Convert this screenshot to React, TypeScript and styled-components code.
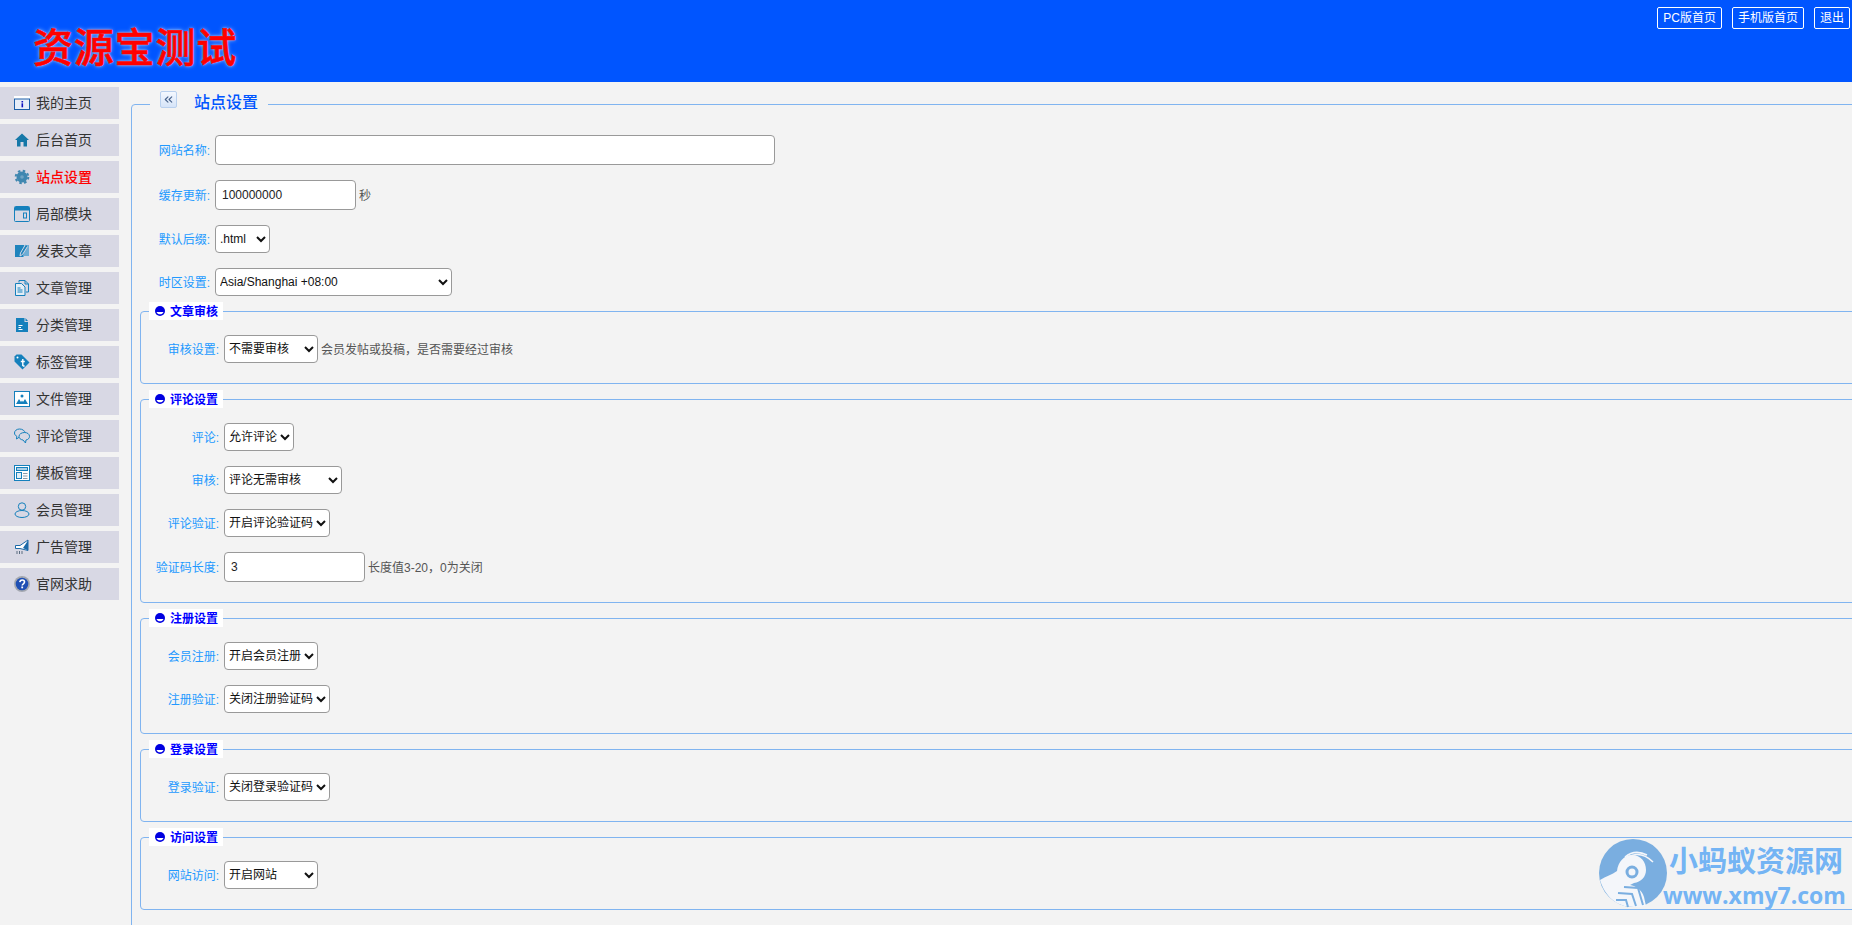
import React from "react";
import styled, { createGlobalStyle } from "styled-components";
import { ChevronsLeft } from "lucide-react";

const GlobalStyle = createGlobalStyle`
  html, body {
    margin: 0;
    padding: 0;
    background: #f3f3f3;
    overflow: hidden;
  }
  body, input, select {
    font-family: "Liberation Sans", "Noto Sans CJK SC", sans-serif;
    font-size: 12px;
  }
`;

const Page = styled.div`
  position: relative;
  width: 100vw;
  height: 100vh;
  overflow: hidden;
`;

const Header = styled.header`
  height: 82px;
  background: #0055ff;
  display: flex;
  justify-content: space-between;
  align-items: flex-start;
`;

const Logo = styled.div`
  margin: 26px 0 0 33px;
  font-size: 40px;
  line-height: 44px;
  font-weight: 500;
  letter-spacing: 0.8px;
  color: #ff0000;
  -webkit-text-stroke: 0.6px #ff0000;
  text-shadow: 0 0 4px #a8c8f4, 0 0 2px #a8c8f4;
`;

const TopLinks = styled.nav`
  display: flex;
  gap: 10px;
  margin: 7px 2px 0 0;
`;

const TopLink = styled.a`
  height: 20px;
  line-height: 20px;
  padding: 0 5px;
  border: 1px solid #ffffff;
  border-radius: 2px;
  color: #ffffff;
  font-size: 12px;
`;

const Body = styled.div`
  display: flex;
`;

const Sidebar = styled.aside`
  flex: none;
  width: 119px;
  padding-top: 5px;
  display: flex;
  flex-direction: column;
  gap: 5px;
`;

const MenuItem = styled.a<{ $active?: boolean }>`
  height: 32px;
  display: flex;
  align-items: center;
  gap: 6px;
  padding-left: 14px;
  background: #d8d8e4;
  font-size: 14px;
  color: ${(p) => (p.$active ? "#ff0000" : "#333333")};
  font-weight: ${(p) => (p.$active ? 500 : 400)};
`;

const MenuLabel = styled.span`
  padding-bottom: 2px;
`;

const MenuIcon = styled.svg`
  flex: none;
  width: 16px;
  height: 16px;
`;

const Main = styled.main`
  flex: none;
  width: 1780px;
  margin-left: 12px;
`;

const OuterSet = styled.fieldset`
  margin: 6px 0 0;
  padding: 0 8px 20px;
  min-width: 0;
  border: 1px solid #80b4f0;
  border-radius: 4px;
`;

const OuterLegend = styled.legend`
  margin-left: 10px;
  padding: 3px 10px 0;
  height: 29px;
  display: flex;
  align-items: flex-start;
`;

const CollapseButton = styled.span`
  width: 15px;
  height: 15px;
  border: 1px solid #b9d0ee;
  border-radius: 2px;
  background: linear-gradient(#f4f8fe, #d6e4f8);
  display: flex;
  align-items: center;
  justify-content: center;
  color: #46618a;
`;

const PageTitle = styled.span`
  margin: 1px 0 0 17px;
  font-size: 16px;
  line-height: 22px;
  font-weight: 500;
  color: #0055ff;
`;

const InnerSet = styled.fieldset`
  margin: 6px 0 0;
  padding: 0 8px 20px;
  min-width: 0;
  border: 1px solid #80b4f0;
  border-radius: 4px;
`;

const InnerLegend = styled.legend`
  height: 18px;
  padding: 0 5px 0 6px;
  background: #ffffff;
  display: flex;
  align-items: center;
  gap: 5px;
  font-size: 12px;
  font-weight: 700;
  color: #0000ff;
`;

const LegendText = styled.span`
  padding-bottom: 2px;
`;

const Row = styled.div`
  margin-top: 15px;
  display: flex;
  align-items: center;
`;

const Label = styled.label`
  flex: none;
  width: 70px;
  margin-right: 5px;
  padding-bottom: 2px;
  text-align: right;
  font-size: 12px;
  white-space: nowrap;
  color: #2299ff;
`;

const TextInput = styled.input<{ $w: number }>`
  box-sizing: border-box;
  width: ${(p) => p.$w}px;
  height: 30px;
  padding: 0 6px;
  background: #ffffff;
  border: 1px solid #999999;
  border-radius: 4px;
  color: #222222;
  font-size: 12px;
  outline: none;
`;

const Select = styled.select<{ $w: number }>`
  box-sizing: border-box;
  width: ${(p) => p.$w}px;
  height: 28px;
  background: #ffffff;
  border: 1px solid #999999;
  border-radius: 4px;
  color: #111111;
  font-size: 12px;
`;

const Hint = styled.span`
  margin-left: 3px;
  padding-bottom: 2px;
  color: #555555;
  font-size: 12px;
`;

const Watermark = styled.div`
  position: absolute;
  left: 1598px;
  top: 838px;
  display: flex;
  align-items: flex-start;
`;

const WatermarkText = styled.div`
  margin: 4px 0 0 -5px;
  display: flex;
  flex-direction: column;
  color: #74b4f4;
  font-weight: 700;
`;

const WatermarkName = styled.span`
  font-size: 29px;
  line-height: 40px;
  margin-left: 6px;
  white-space: nowrap;
`;

const WatermarkUrl = styled.span`
  font-family: "Open Sans", sans-serif;
  font-size: 23px;
  line-height: 26px;
  white-space: nowrap;
`;

const blue = "#1580bc";
const itemBg = "#d8d8e4";

const icons: Record<string, React.ReactNode> = {
  window: (
    <>
      <rect x="0" y="1" width="16" height="14" fill="#1d5fa8" />
      <rect x="0" y="1" width="16" height="2.5" fill="#ffffff" />
      <rect x="1" y="4.5" width="14" height="9.5" fill="#e8eef8" />
      <rect x="7.5" y="6" width="1.6" height="1.5" fill="#1010c0" />
      <rect x="7.5" y="8.3" width="1.6" height="4" fill="#1010c0" />
    </>
  ),
  home: <path d="M8 1.500L1 8h2v6.500h3.500V10h3v4.500H13V8h2z" fill="#1678a8" />,
  gear: (
    <>
      <circle cx="8" cy="8" r="5.500" fill="#3f87b0" />
      <circle cx="8" cy="8" r="6.300" fill="none" stroke="#3f87b0" strokeWidth="2" strokeDasharray="2.500 2.450" />
      <circle cx="8" cy="8" r="1.800" fill="#6fa4c4" />
    </>
  ),
  block: (
    <>
      <rect x="0.500" y="0.500" width="15" height="15" rx="1" fill="none" stroke={blue} />
      <rect x="1" y="1" width="14" height="3.500" fill={blue} />
      <rect x="9.500" y="7" width="3" height="5" fill="none" stroke={blue} />
    </>
  ),
  write: (
    <>
      <rect x="1" y="2" width="14" height="12" fill="#1f84bd" />
      <path d="M10 2h5v12H9z" fill="#6fadd4" />
      <path d="M11.500 1.500L6.500 10 6 13l2.500-1.500 5-8" fill="#1f84bd" stroke={itemBg} strokeWidth="1" />
      <path d="M10 13.500h5" stroke={itemBg} />
    </>
  ),
  docs: (
    <>
      <path d="M5 2.500V.5h6l3.500 3.500v8H12" fill="none" stroke={blue} />
      <path d="M11 .5V4h3.500" fill="none" stroke={blue} />
      <path d="M1.500 3.500h6L11 7v8.500H1.500z" fill="#e4eef6" stroke={blue} />
      <path d="M3.500 8h3M3.500 10h5M3.500 12h5" stroke={blue} />
    </>
  ),
  file: (
    <>
      <path d="M2 1h8.500v4H14v10H2z" fill={blue} />
      <path d="M11.500 1L14 4h-2.500z" fill={blue} />
      <path d="M4.500 8.500h4M4.500 10.500h2.500M4.500 12.500h4" stroke="#ffffff" />
    </>
  ),
  tag: (
    <>
      <path d="M0.500 2.500L2.500 0.500h5l8 8-7 7-8-8z" fill={blue} />
      <circle cx="3.500" cy="3.500" r="1" fill="#ffffff" />
      <path d="M8.800 5v7M6.800 7.500h4M8.800 12h1.800" stroke="#ffffff" strokeWidth="1.400" fill="none" />
    </>
  ),
  image: (
    <>
      <rect x="0.500" y="0.500" width="15" height="15" fill="#ffffff" stroke={blue} />
      <circle cx="8" cy="5" r="1.500" fill={blue} />
      <path d="M2 13l3-5 2 3 1-1.500 1 1.500 2-3 3 5z" fill={blue} />
    </>
  ),
  chat: (
    <>
      <path d="M5.500 1C2.800 1 .5 2.700.5 5c0 1.500 1 2.700 2.300 3.300L2.500 11l3-2c3 0 5.500-1.600 5.500-4s-2.700-4-5.500-4z" fill="none" stroke={blue} />
      <path d="M10.500 4.500c2.800 0 5 1.600 5 3.800 0 2-1.500 3.400-3.500 3.700l-.5 3-2.500-3c-2.500-.3-4-1.800-4-3.700 0-2.200 2.700-3.800 5.500-3.800z" fill={itemBg} stroke={blue} />
    </>
  ),
  panel: (
    <>
      <rect x="0.500" y="0.500" width="15" height="15" fill="#ffffff" stroke={blue} />
      <rect x="2.500" y="2.500" width="11" height="3" fill="#a8d0e8" stroke={blue} />
      <rect x="2.500" y="7.500" width="5" height="6" fill="#e2eef6" stroke={blue} />
      <path d="M9 8.500h4.500M9 11h4.500M9 13.500h4.500" stroke="#8a9aa8" />
    </>
  ),
  user: (
    <>
      <circle cx="8" cy="4.500" r="3.700" fill="none" stroke={blue} />
      <ellipse cx="8" cy="12" rx="7" ry="3.500" fill="none" stroke={blue} />
    </>
  ),
  horn: (
    <>
      <path d="M1.500 6.500h4.500L14 1v10.500L6 9.500H1.500z" fill="#ffffff" stroke="#1c6aa8" />
      <path d="M14 1.500v10L9 9z" fill="#1c6aa8" />
      <path d="M3 12v3M5.500 12v3M8 12v3" stroke="#5a6c80" />
    </>
  ),
  help: (
    <>
      <circle cx="8" cy="8" r="8" fill="#a4a8b0" />
      <circle cx="8" cy="8" r="6.300" fill="#1f4fb4" />
      <path d="M5.800 6.200C6 4.700 7 4 8.200 4c1.300 0 2.300.8 2.300 2 0 1.800-2.300 1.800-2.300 3.600" fill="none" stroke="#ffffff" strokeWidth="1.600" />
      <rect x="7.300" y="10.500" width="1.800" height="1.800" fill="#ffffff" />
    </>
  ),
};

const menu = [
  { key: "window", label: "我的主页" },
  { key: "home", label: "后台首页" },
  { key: "gear", label: "站点设置", active: true },
  { key: "block", label: "局部模块" },
  { key: "write", label: "发表文章" },
  { key: "docs", label: "文章管理" },
  { key: "file", label: "分类管理" },
  { key: "tag", label: "标签管理" },
  { key: "image", label: "文件管理" },
  { key: "chat", label: "评论管理" },
  { key: "panel", label: "模板管理" },
  { key: "user", label: "会员管理" },
  { key: "horn", label: "广告管理" },
  { key: "help", label: "官网求助" },
];

function SetTitle({ children }: { children: React.ReactNode }) {
  return (
    <InnerLegend>
      <svg width="10" height="10" viewBox="0 0 10 10">
        <circle cx="5" cy="5" r="5" fill="#0000e0" />
        <path d="M1.500 6h7c-.5 1.600-2 2.300-3.500 2.300S2 7.600 1.500 6z" fill="#ffffff" />
      </svg>
      <LegendText>{children}</LegendText>
    </InnerLegend>
  );
}

function SelectRow({ label, width, options, hint }: { label: string; width: number; options: string[]; hint?: string }) {
  return (
    <Row>
      <Label>{label}</Label>
      <Select $w={width} defaultValue={options[0]}>
        {options.map((o) => (
          <option key={o}>{o}</option>
        ))}
      </Select>
      {hint && <Hint>{hint}</Hint>}
    </Row>
  );
}

function InputRow({ label, width, value, hint }: { label: string; width: number; value: string; hint?: string }) {
  return (
    <Row>
      <Label>{label}</Label>
      <TextInput $w={width} defaultValue={value} />
      {hint && <Hint>{hint}</Hint>}
    </Row>
  );
}

export default function App() {
  return (
    <Page>
      <GlobalStyle />
      <Header>
        <Logo>资源宝测试</Logo>
        <TopLinks>
          <TopLink>PC版首页</TopLink>
          <TopLink>手机版首页</TopLink>
          <TopLink>退出</TopLink>
        </TopLinks>
      </Header>
      <Body>
        <Sidebar>
          {menu.map((m) => (
            <MenuItem key={m.key} $active={m.active}>
              <MenuIcon viewBox="0 0 16 16">{icons[m.key]}</MenuIcon>
              <MenuLabel>{m.label}</MenuLabel>
            </MenuItem>
          ))}
        </Sidebar>
        <Main>
          <OuterSet>
            <OuterLegend>
              <CollapseButton>
                <ChevronsLeft size={13} strokeWidth={2} />
              </CollapseButton>
              <PageTitle>站点设置</PageTitle>
            </OuterLegend>
            <InputRow label="网站名称:" width={560} value="" />
            <InputRow label="缓存更新:" width={141} value="100000000" hint="秒" />
            <SelectRow label="默认后缀:" width={55} options={[".html", ".htm"]} />
            <SelectRow label="时区设置:" width={237} options={["Asia/Shanghai +08:00"]} />
            <InnerSet>
              <SetTitle>文章审核</SetTitle>
              <SelectRow label="审核设置:" width={94} options={["不需要审核", "需要审核"]} hint="会员发帖或投稿，是否需要经过审核" />
            </InnerSet>
            <InnerSet>
              <SetTitle>评论设置</SetTitle>
              <SelectRow label="评论:" width={70} options={["允许评论", "关闭评论"]} />
              <SelectRow label="审核:" width={118} options={["评论无需审核", "评论需要审核"]} />
              <SelectRow label="评论验证:" width={106} options={["开启评论验证码", "关闭评论验证码"]} />
              <InputRow label="验证码长度:" width={141} value="3" hint="长度值3-20，0为关闭" />
            </InnerSet>
            <InnerSet>
              <SetTitle>注册设置</SetTitle>
              <SelectRow label="会员注册:" width={94} options={["开启会员注册", "关闭会员注册"]} />
              <SelectRow label="注册验证:" width={106} options={["关闭注册验证码", "开启注册验证码"]} />
            </InnerSet>
            <InnerSet>
              <SetTitle>登录设置</SetTitle>
              <SelectRow label="登录验证:" width={106} options={["关闭登录验证码", "开启登录验证码"]} />
            </InnerSet>
            <InnerSet>
              <SetTitle>访问设置</SetTitle>
              <SelectRow label="网站访问:" width={94} options={["开启网站", "关闭网站"]} />
            </InnerSet>
          </OuterSet>
        </Main>
      </Body>
      <Watermark>
        <svg width="70" height="70" viewBox="0 0 70 70">
          <circle cx="35" cy="35" r="34" fill="#7aaee0" />
          <path d="M2 42c6-4 12-5 17-9 1-9 7-16 15-16 9 0 14 7 14 15 0 7-5 12-12 13l-4 2c6 1 12 5 14 12l2 9c-3 1-6 1-12 1C18 69 7 58 2 42z" fill="#f4f6fa" />
          <circle cx="34" cy="34" r="5" fill="none" stroke="#7aaee0" strokeWidth="3" />
          <path d="M24 24c8-9 20-11 31 0M27 19c6-5 14-6 22-2" fill="none" stroke="#f4f6fa" strokeWidth="1.600" />
          <path d="M26 49l14 1 5 17M20 55l14 1 4 12M18 62l10 0 2 7" fill="none" stroke="#7aaee0" strokeWidth="2" />
        </svg>
        <WatermarkText>
          <WatermarkName>小蚂蚁资源网</WatermarkName>
          <WatermarkUrl>www.xmy7.com</WatermarkUrl>
        </WatermarkText>
      </Watermark>
    </Page>
  );
}
